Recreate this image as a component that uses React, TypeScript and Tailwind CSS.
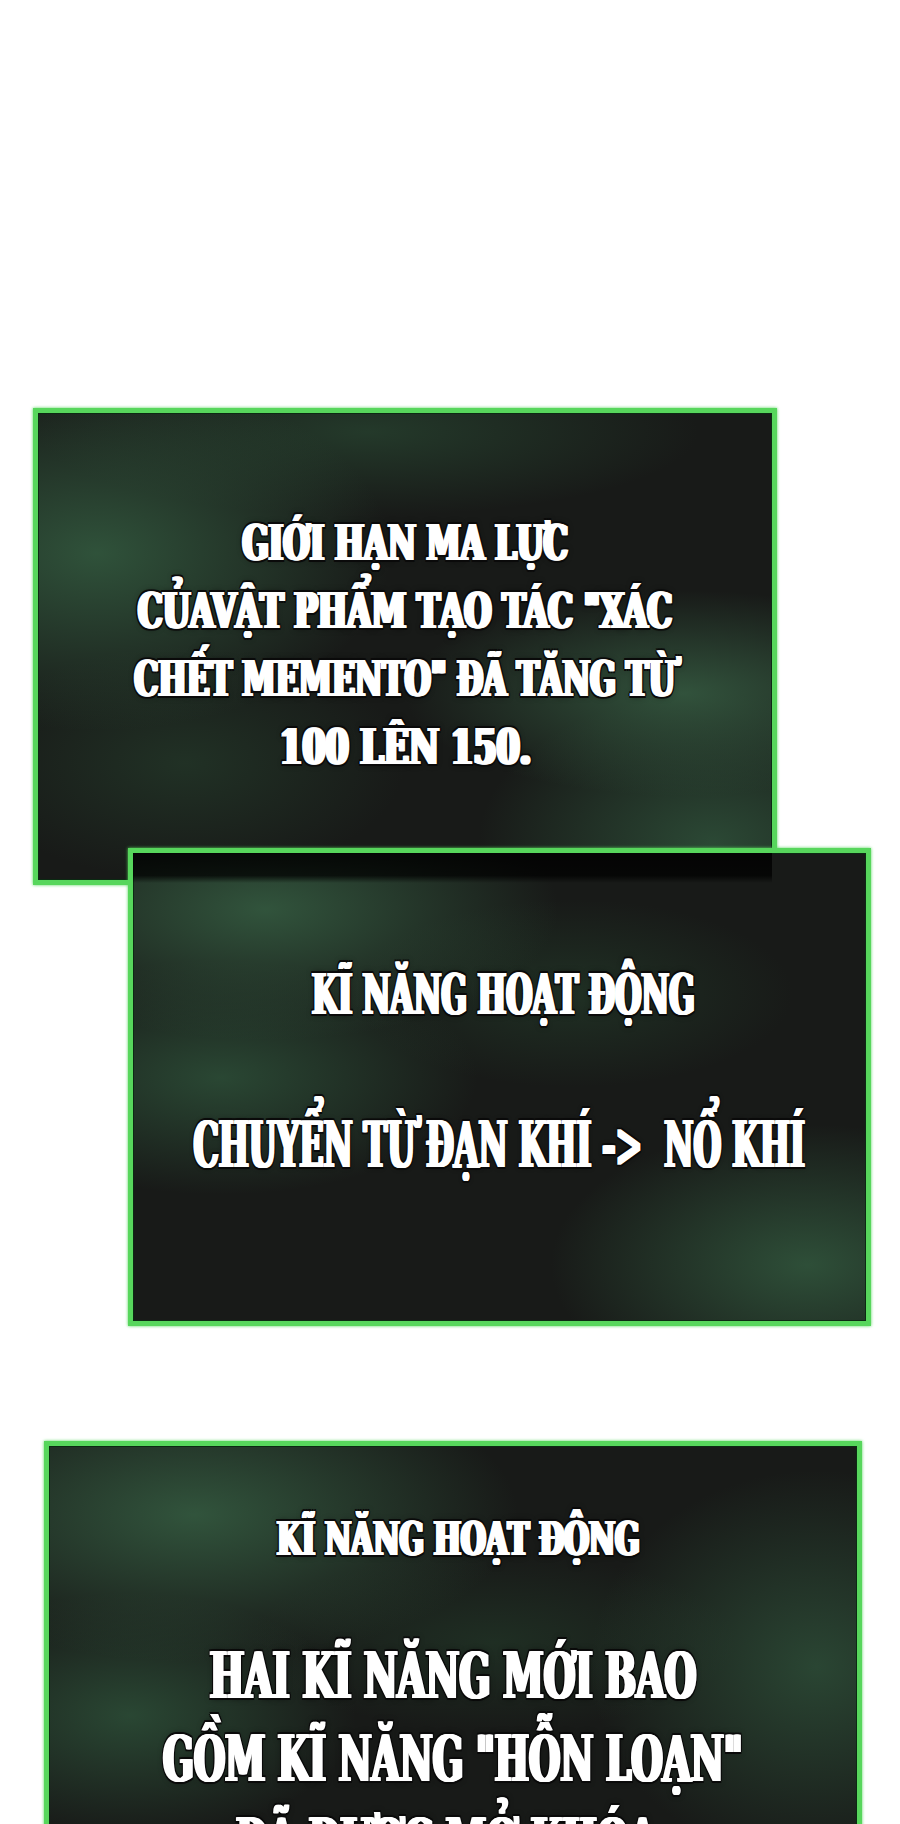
import React from "react";

// heavy condensed caption type: white fill, dark outline
const CAPTION =
  "inline-block whitespace-pre text-white font-['DejaVu_Serif','Liberation_Serif',serif] font-bold [text-shadow:1.5px_0_0_#fff,-1.5px_0_0_#fff,3px_0_0_#fff,-3px_0_0_#fff,5px_0_0_#0a0a0a,-5px_0_0_#0a0a0a,0_2px_0_#0a0a0a,0_-2px_0_#0a0a0a,4px_2px_0_#0a0a0a,-4px_2px_0_#0a0a0a,4px_-2px_0_#0a0a0a,-4px_-2px_0_#0a0a0a,0_0_8px_rgba(0,0,0,0.7)]";

const FRAME =
  "relative border-[5px] border-[#57d65c] shadow-[0_0_3px_#57d65c,inset_0_0_0_1px_#0b2a12] bg-[#181a18]";

function Line({ children, className }: { children: React.ReactNode; className: string }) {
  return (
    <div className="flex justify-center">
      <span className={`${CAPTION} ${className}`}>{children}</span>
    </div>
  );
}

export default function App() {
  return (
    <div className="relative w-[900px] h-[1824px] overflow-hidden bg-white pt-[408px]">
      {/* item upgrade notice */}
      <div
        className={`${FRAME} ml-[33px] w-[744px] h-[477px] pt-[96px] [background-image:radial-gradient(ellipse_40%_38%_at_8%_30%,rgba(50,88,62,0.9),transparent),radial-gradient(ellipse_38%_22%_at_88%_60%,rgba(54,92,66,0.85),transparent),radial-gradient(ellipse_32%_32%_at_92%_92%,rgba(48,84,60,0.8),transparent),radial-gradient(ellipse_45%_18%_at_45%_4%,rgba(42,74,52,0.65),transparent),radial-gradient(ellipse_30%_25%_at_20%_75%,rgba(40,68,48,0.55),transparent)]`}
      >
        <Line className="text-[48px] leading-[68px] scale-x-[0.64]">GIỚI HẠN MA LỰC</Line>
        <Line className="text-[48px] leading-[68px] scale-x-[0.65]">CỦAVẬT PHẨM TẠO TÁC "XÁC</Line>
        <Line className="text-[48px] leading-[68px] scale-x-[0.626]">CHẾT MEMENTO" ĐÃ TĂNG TỪ</Line>
        <Line className="text-[48px] leading-[68px] scale-x-[0.69]">100 LÊN 150.</Line>
      </div>

      {/* active skill change */}
      <div
        className={`${FRAME} -mt-[37px] ml-[128px] w-[743px] h-[478px] pt-[109px] [background-image:radial-gradient(ellipse_40%_28%_at_18%_12%,rgba(52,90,64,0.9),transparent),radial-gradient(ellipse_35%_25%_at_12%_48%,rgba(46,82,58,0.8),transparent),radial-gradient(ellipse_35%_30%_at_92%_88%,rgba(50,88,62,0.85),transparent),radial-gradient(ellipse_30%_20%_at_60%_30%,rgba(38,66,46,0.55),transparent)]`}
      >
        <div className="absolute left-0 top-0 w-[639px] h-[30px] bg-[linear-gradient(to_bottom,rgba(0,0,0,0.85),rgba(0,0,0,0.75)_75%,rgba(0,0,0,0))]" />
        <div className="relative pl-[8px]">
          <Line className="text-[56px] leading-[64px] scale-x-[0.539]">KĨ NĂNG HOẠT ĐỘNG</Line>
        </div>
        <div className="relative mt-[83px]">
          <Line className="text-[64px] leading-[72px] scale-x-[0.497]">{"CHUYỂN TỪ ĐẠN KHÍ ->  NỔ KHÍ"}</Line>
        </div>
      </div>

      {/* new skills */}
      <div
        className={`${FRAME} mt-[115px] ml-[44px] w-[818px] h-[500px] pt-[65px] [background-image:radial-gradient(ellipse_40%_30%_at_18%_14%,rgba(52,90,64,0.9),transparent),radial-gradient(ellipse_28%_25%_at_10%_55%,rgba(46,82,58,0.8),transparent),radial-gradient(ellipse_28%_40%_at_95%_45%,rgba(48,84,60,0.75),transparent),radial-gradient(ellipse_30%_18%_at_55%_40%,rgba(38,66,46,0.5),transparent)]`}
      >
        <div className="pl-[10px]">
          <Line className="text-[47px] leading-[56px] scale-x-[0.608]">KĨ NĂNG HOẠT ĐỘNG</Line>
        </div>
        <div className="mt-[67px]">
          <Line className="text-[64px] leading-[83px] scale-x-[0.571]">HAI KĨ NĂNG MỚI BAO</Line>
          <Line className="text-[64px] leading-[83px] scale-x-[0.564]">GỒM KĨ NĂNG "HỖN LOẠN"</Line>
          <Line className="text-[64px] leading-[83px] scale-x-[0.57]">ĐÃ ĐƯỢC MỞ KHÓA.</Line>
        </div>
      </div>
    </div>
  );
}
